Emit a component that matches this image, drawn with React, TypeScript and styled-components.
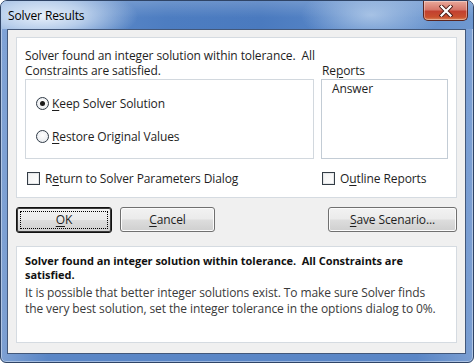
import React from 'react';
import styled, { createGlobalStyle } from 'styled-components';

const GlobalStyle = createGlobalStyle`
  *, *::before, *::after { box-sizing: border-box; }
  html, body { margin: 0; padding: 0; background: #ffffff; }
  body {
    font-family: "Open Sans", "Noto Sans", sans-serif;
    font-size: 12px;
    color: #1e1e1e;
  }
`;

const Window = styled.div`
  width: 474px;
  height: 363px;
  display: flex;
  flex-direction: column;
  border: 1px solid #2f4466;
  border-radius: 7px 7px 6px 6px;
  padding: 0 7px 8px 6px;
  background:
    linear-gradient(90deg, rgba(255,255,255,0.22) 0%, rgba(255,255,255,0) 10%, rgba(255,255,255,0) 88%, rgba(255,255,255,0.2) 100%),
    linear-gradient(180deg, #7fa3d8 0px, #5f8bcb 30px, #5a86c6 100%);
  box-shadow: inset 0 0 0 1px rgba(255,255,255,0.4);
  overflow: hidden;
`;

const TitleBar = styled.div`
  height: 28px;
  flex: none;
  display: flex;
  align-items: flex-start;
  justify-content: space-between;
  margin: 0 -7px 0 -6px;
  padding: 0 6px 0 7px;
  background:
    radial-gradient(ellipse 95px 30px at 42px 15px, rgba(238,245,253,0.95) 0%, rgba(220,233,248,0.7) 45%, rgba(220,233,248,0) 100%),
    radial-gradient(ellipse 70px 30px at 370px 14px, rgba(190,212,238,0.75) 0%, rgba(190,212,238,0) 100%),
    linear-gradient(180deg, rgba(255,255,255,0.18) 0%, rgba(255,255,255,0) 60%),
    linear-gradient(90deg, #6e97d0 0%, #4d7dc1 35%, #4a7abf 55%, #5a88c8 75%, #6f98d0 100%);
`;

const TitleText = styled.span`
  font-size: 12px;
  letter-spacing: -0.1px;
  line-height: 16px;
  margin-top: 7px;
  color: #000;
`;

const CloseButton = styled.div`
  width: 45px;
  height: 20px;
  margin-right: -1px;
  border: 1px solid #5a2520;
  border-top: none;
  border-radius: 0 0 5px 5px;
  background: linear-gradient(180deg, #e9a99b 0%, #d6776a 45%, #c2412f 55%, #c9502e 85%, #db8a5d 100%);
  box-shadow: inset 0 0 0 1px rgba(255,255,255,0.35);
  display: flex;
  align-items: center;
  justify-content: center;
`;

const Client = styled.div`
  flex: 1;
  display: flex;
  flex-direction: column;
  border: 1px solid #43587a;
  background: #f0f0f0;
  padding: 7px 8px 10px 8px;
`;

const Panel = styled.div`
  flex: none;
  background: #ffffff;
  border: 1px solid #d5dbe1;
`;

const TopPanel = styled(Panel)`
  height: 161px;
  padding: 10px 8px 0 8px;
  display: flex;
  flex-direction: column;
  gap: 12px;
`;

const OptionsGrid = styled.div`
  display: grid;
  grid-template-columns: 289px 127px;
  column-gap: 7px;
  align-items: end;
`;

const Column = styled.div`
  display: flex;
  flex-direction: column;
  gap: 1px;
`;

const MessageLine = styled.div`
  white-space: pre;
  height: 15px;
  line-height: 15px;
  letter-spacing: -0.1px;
  color: #1e1e1e;
`;

const GroupBox = styled.div`
  height: 80px;
  border: 1px solid #d2d8de;
  display: flex;
  flex-direction: column;
  padding: 16px 0 0 10px;
  gap: 18px;
`;

const OptionLabel = styled.label`
  display: flex;
  align-items: center;
  gap: 3px;
  line-height: 15px;
  letter-spacing: -0.1px;
  color: #1e1e1e;
`;

const Radio = styled.span<{ $checked?: boolean }>`
  width: 13px;
  height: 13px;
  border-radius: 50%;
  border: 1px solid #2f3a46;
  background: radial-gradient(circle at 50% 40%, #ffffff, #e3e6ea);
  display: flex;
  align-items: center;
  justify-content: center;
  &::after {
    content: '';
    width: 5px;
    height: 5px;
    border-radius: 50%;
    background: ${(p) => (p.$checked ? '#1a1a1a' : 'transparent')};
  }
`;

const Check = styled.span`
  width: 13px;
  height: 13px;
  border: 1px solid #333c45;
  background: linear-gradient(135deg, #f1f1f1, #ffffff);
  box-shadow: inset 0 0 0 1px #e4e6e8;
`;

const ReportsLabel = styled.div`
  line-height: 15px;
  letter-spacing: -0.1px;
  padding-left: 1px;
`;

const ListBox = styled.div`
  height: 80px;
  border: 1px solid #c3ccd5;
  padding: 1px 0 0 10px;
`;

const ListItem = styled.div`
  line-height: 15px;
  letter-spacing: -0.1px;
`;

const CheckRow = styled.div`
  display: grid;
  grid-template-columns: 295px 127px;
  padding-left: 2px;
`;

const CheckLabel = styled(OptionLabel)`
  gap: 5px;
`;

const ButtonRow = styled.div`
  flex: none;
  display: flex;
  align-items: center;
  height: 27px;
  margin: 8px 0 13px 0;
`;

const Button = styled.button<{ $width: number; $default?: boolean }>`
  position: relative;
  width: ${(p) => p.$width}px;
  height: ${(p) => (p.$default ? 26 : 25)}px;
  padding: 0;
  font-family: "Open Sans", "Noto Sans", sans-serif;
  font-size: 12px;
  letter-spacing: -0.1px;
  color: #1e1e1e;
  border-radius: 3px;
  border: 1px solid ${(p) => (p.$default ? '#111' : '#707070')};
  box-shadow: ${(p) => (p.$default ? 'inset 0 0 0 1px #3a3a3a' : 'inset 0 0 0 1px #fbfbfb')};
  background: linear-gradient(180deg, #f2f2f2 0%, #ebebeb 48%, #dddddd 52%, #cfcfcf 100%);
  display: flex;
  align-items: center;
  justify-content: center;
`;

const FocusRing = styled.span`
  position: absolute;
  inset: 3px;
  border: 1px dotted #000;
`;

const ButtonGap = styled.div<{ $w?: number }>`
  flex: ${(p) => (p.$w ? 'none' : '1')};
  width: ${(p) => (p.$w ? `${p.$w}px` : 'auto')};
`;

const BottomPanel = styled(Panel)`
  height: 97px;
  padding: 7px 8px 0 8px;
  display: flex;
  flex-direction: column;
  gap: 3px;
`;

const BoldLine = styled.div`
  font-weight: 700;
  font-size: 11px;
  height: 14px;
  line-height: 14px;
  white-space: pre;
  letter-spacing: -0.04px;
  color: #111;
`;

const BodyLine = styled.div`
  height: 16px;
  line-height: 16px;
  white-space: pre;
  letter-spacing: -0.1px;
  color: #3a3a3a;
`;

const U = styled.span`
  text-decoration: underline;
  text-underline-offset: 2px;
`;

function CloseGlyph() {
  return (
    <svg width="14" height="12" viewBox="0 0 14 12">
      <path d="M2.5 1.5 L11.5 10.5 M11.5 1.5 L2.5 10.5" stroke="#4a1c16" strokeWidth="4" strokeLinecap="square" />
      <path d="M2.5 1.5 L11.5 10.5 M11.5 1.5 L2.5 10.5" stroke="#ffffff" strokeWidth="2.2" strokeLinecap="square" />
    </svg>
  );
}

export default function App() {
  return (
    <>
      <GlobalStyle />
      <Window>
        <TitleBar>
          <TitleText>Solver Results</TitleText>
          <CloseButton>
            <CloseGlyph />
          </CloseButton>
        </TitleBar>
        <Client>
          <TopPanel>
            <OptionsGrid>
              <Column>
                <div>
                  <MessageLine>{'Solver found an integer solution within tolerance.  All'}</MessageLine>
                  <MessageLine>Constraints are satisfied.</MessageLine>
                </div>
                <GroupBox>
                  <OptionLabel>
                    <Radio $checked />
                    <span><U>K</U>eep Solver Solution</span>
                  </OptionLabel>
                  <OptionLabel>
                    <Radio />
                    <span><U>R</U>estore Original Values</span>
                  </OptionLabel>
                </GroupBox>
              </Column>
              <Column>
                <ReportsLabel>Re<U>p</U>orts</ReportsLabel>
                <ListBox>
                  <ListItem>Answer</ListItem>
                </ListBox>
              </Column>
            </OptionsGrid>
            <CheckRow>
              <CheckLabel>
                <Check />
                <span>R<U>e</U>turn to Solver Parameters Dialog</span>
              </CheckLabel>
              <CheckLabel>
                <Check />
                <span>O<U>u</U>tline Reports</span>
              </CheckLabel>
            </CheckRow>
          </TopPanel>
          <ButtonRow>
            <Button $width={96} $default>
              <FocusRing />
              <span><U>O</U>K</span>
            </Button>
            <ButtonGap $w={8} />
            <Button $width={95}>
              <span><U>C</U>ancel</span>
            </Button>
            <ButtonGap />
            <Button $width={129}>
              <span><U>S</U>ave Scenario...</span>
            </Button>
          </ButtonRow>
          <BottomPanel>
            <div>
              <BoldLine>{'Solver found an integer solution within tolerance.  All Constraints are'}</BoldLine>
              <BoldLine>satisfied.</BoldLine>
            </div>
            <div>
              <BodyLine>It is possible that better integer solutions exist. To make sure Solver finds</BodyLine>
              <BodyLine>the very best solution, set the integer tolerance in the options dialog to 0%.</BodyLine>
            </div>
          </BottomPanel>
        </Client>
      </Window>
    </>
  );
}
